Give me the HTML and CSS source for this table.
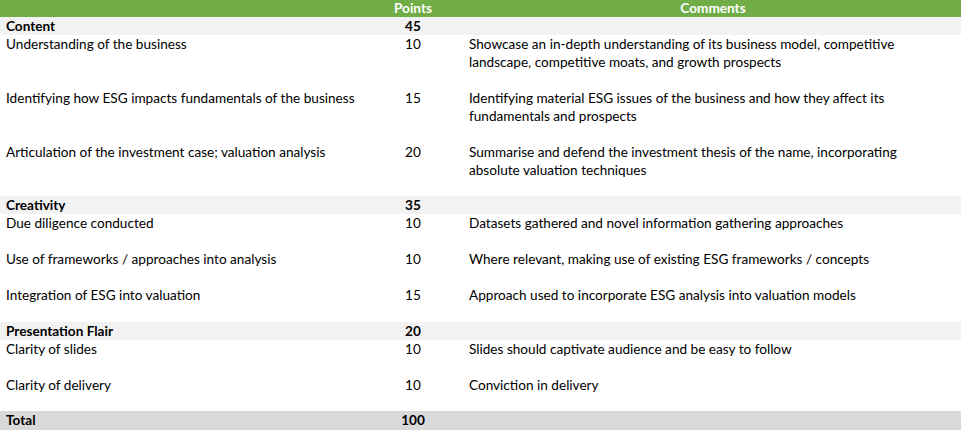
FILE: index.html
```html
<!DOCTYPE html>
<html>
<head>
<meta charset="utf-8">
<link rel="stylesheet" href="styles.css">
</head>
<body>
<table class="rubric">
  <colgroup>
    <col class="c-crit">
    <col class="c-pts">
    <col class="c-com">
  </colgroup>
  <thead>
    <tr class="head">
      <th></th>
      <th>Points</th>
      <th>Comments</th>
    </tr>
  </thead>
  <tbody>
    <tr class="section">
      <td>Content</td><td class="pts">45</td><td></td>
    </tr>
    <tr class="h3">
      <td>Understanding of the business</td><td class="pts">10</td>
      <td>Showcase an in-depth understanding of its business model, competitive<br>landscape, competitive moats, and growth prospects</td>
    </tr>
    <tr class="h3">
      <td>Identifying how ESG impacts fundamentals of the business</td><td class="pts">15</td>
      <td>Identifying material ESG issues of the business and how they affect its<br>fundamentals and prospects</td>
    </tr>
    <tr class="h3b">
      <td>Articulation of the investment case; valuation analysis</td><td class="pts">20</td>
      <td>Summarise and defend the investment thesis of the name, incorporating<br>absolute valuation techniques</td>
    </tr>
    <tr class="section">
      <td>Creativity</td><td class="pts">35</td><td></td>
    </tr>
    <tr class="h2">
      <td>Due diligence conducted</td><td class="pts">10</td>
      <td>Datasets gathered and novel information gathering approaches</td>
    </tr>
    <tr class="h2">
      <td>Use of frameworks / approaches into analysis</td><td class="pts">10</td>
      <td>Where relevant, making use of existing ESG frameworks / concepts</td>
    </tr>
    <tr class="h2">
      <td>Integration of ESG into valuation</td><td class="pts">15</td>
      <td>Approach used to incorporate ESG analysis into valuation models</td>
    </tr>
    <tr class="section">
      <td>Presentation Flair</td><td class="pts">20</td><td></td>
    </tr>
    <tr class="h2">
      <td>Clarity of slides</td><td class="pts">10</td>
      <td>Slides should captivate audience and be easy to follow</td>
    </tr>
    <tr class="h2b">
      <td>Clarity of delivery</td><td class="pts">10</td>
      <td>Conviction in delivery</td>
    </tr>
    <tr class="total">
      <td>Total</td><td class="pts">100</td><td></td>
    </tr>
  </tbody>
</table>
</body>
</html>
```
FILE: styles.css
```css
html, body {
  margin: 0;
  padding: 0;
  background: #ffffff;
}
body {
  font-family: "Lato", "Open Sans", sans-serif;
  font-size: 13.6px;
  color: #000000;
}
.rubric {
  width: 961px;
  border-collapse: collapse;
  table-layout: fixed;
}
.c-crit { width: 361px; }
.c-pts { width: 104px; }
.c-com { width: 496px; }
.rubric th, .rubric td {
  padding: 0 0 0 6px;
  line-height: 18px;
  vertical-align: top;
  text-align: left;
  font-weight: normal;
  white-space: nowrap;
}
.rubric td.pts {
  text-align: center;
  padding: 0;
}
.rubric td:nth-child(3) {
  padding-left: 4px;
}
.head th {
  background: #70ad47;
  color: #ffffff;
  font-weight: bold;
  text-align: center;
  height: 17px;
  line-height: 17px;
  padding: 0;
}
.section td {
  background: #f2f2f2;
  font-weight: bold;
  height: 18px;
}
.h3 td { height: 54px; }
.h3b td { height: 53px; }
.h2 td { height: 36px; }
.h2b td { height: 35px; }
.total td {
  background: #d9d9d9;
  font-weight: bold;
  height: 19px;
  line-height: 19px;
}
```
